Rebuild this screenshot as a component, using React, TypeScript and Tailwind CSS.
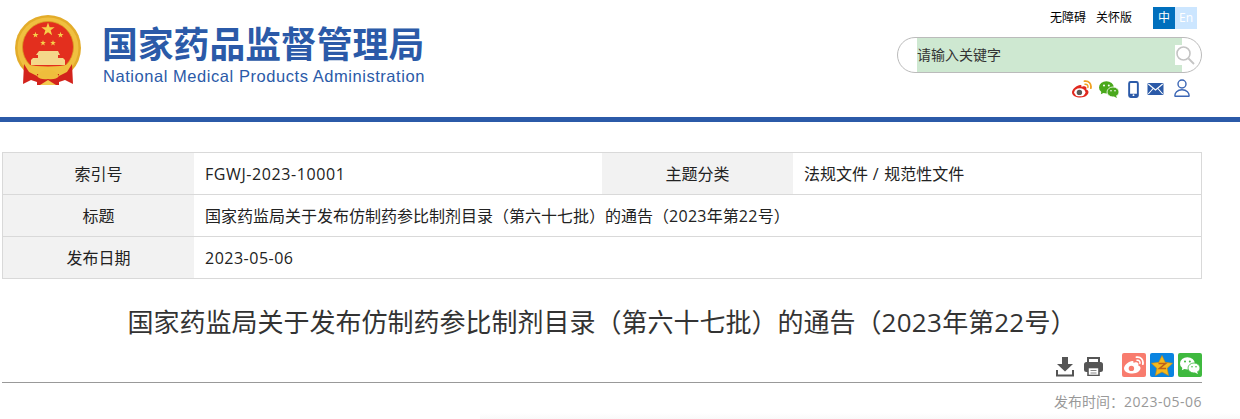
import React from "react";

function Emblem() {
  const star = (cx: number, cy: number, r: number) => {
    const pts: string[] = [];
    for (let i = 0; i < 10; i++) {
      const a = -Math.PI / 2 + (i * Math.PI) / 5;
      const rr = i % 2 === 0 ? r : r * 0.4;
      pts.push(`${cx + rr * Math.cos(a)},${cy + rr * Math.sin(a)}`);
    }
    return <polygon points={pts.join(" ")} fill="#f6d04a" />;
  };
  return (
    <svg width="68" height="72" viewBox="0 0 68 72" className="shrink-0">
      <circle cx="33" cy="34" r="33" fill="#e3ac2a" />
      <circle cx="33" cy="34" r="30.5" fill="#f0c040" />
      <circle cx="33" cy="33" r="25.5" fill="#e32f1e" stroke="#d99a22" strokeWidth="0.8" />
      {star(33, 15.5, 7)}
      {star(20.5, 21, 3.2)}
      {star(45.5, 21, 3.2)}
      {star(28, 29, 3)}
      {star(38, 29, 3)}
      <path d="M24 37 L43 37 L45 41 L43 41 L43 44 L48 44 L50 46 L50 51 L16 51 L16 46 L18 44 L23 44 L23 41 L21 41Z" fill="#f4d88a" />
      <path d="M9 50 Q33 55 57 50 L52 58 Q33 64 14 58Z" fill="#f0c040" />
      <path d="M9 50 L14 58 L22 62 L22 68 L16 66 L8 70Z" fill="#d3231c" />
      <path d="M57 50 L52 58 L44 62 L44 68 L50 66 L58 70Z" fill="#d3231c" />
      <path d="M22 60 L44 60 L44 71 L22 71Z" fill="#d3231c" />
      <path d="M22 62 Q25 56 33 56 Q41 56 44 62 Q41 66 33 65 Q25 66 22 62Z" fill="#efbe3c" />
      <path d="M25 71 L33 66 L41 71Z" fill="#f3cb50" />
    </svg>
  );
}

function Weibo({ eye = "#5a5a5a", wave = "#f0a020", body = "#e0281e" }: { eye?: string; wave?: string; body?: string }) {
  return (
    <svg width="20" height="18" viewBox="0 0 20 18">
      <path d="M8 5 C3 6 0 10 0 12.5 C0 15.5 4 17.5 8.5 17.5 C13.5 17.5 16.5 14.5 16.5 12 C16.5 10.3 15 9.7 14.2 9.5 C14.8 8 14.7 6.6 12.5 6.3 C11.4 6.2 10 6.8 9.4 7 C9.8 5.4 9.4 4.6 8 5Z" fill={body} />
      <ellipse cx="7.8" cy="12.3" rx="5.6" ry="4" fill="#fff" />
      <circle cx="7.4" cy="12.4" r="2.7" fill={eye} />
      <path d="M12.5 1.2 C16.5 0.4 19.8 3.8 18.8 8.2" fill="none" stroke={wave} strokeWidth="1.8" strokeLinecap="round" />
      <path d="M13 4.2 C15 3.8 16.4 5.4 15.9 7.4" fill="none" stroke={wave} strokeWidth="1.5" strokeLinecap="round" />
    </svg>
  );
}

function Wechat({ color = "#4aa81c", inner = "#fff", size = 20 }: { color?: string; inner?: string; size?: number }) {
  return (
    <svg width={size} height={size * 0.85} viewBox="0 0 20 17">
      <ellipse cx="7.4" cy="6.4" rx="7.4" ry="6.2" fill={color} />
      <path d="M2.5 10 L1.8 13.2 L5.6 11.5Z" fill={color} />
      <ellipse cx="14" cy="11" rx="6" ry="5" fill={color} stroke={inner} strokeWidth="0.8" />
      <path d="M17 14.5 L18 17 L14.8 15.6Z" fill={color} />
      <circle cx="5" cy="4.6" r="1" fill={inner} />
      <circle cx="9.8" cy="4.6" r="1" fill={inner} />
      <circle cx="12" cy="9.8" r="0.8" fill={inner} />
      <circle cx="16" cy="9.8" r="0.8" fill={inner} />
    </svg>
  );
}

function TopIcons() {
  return (
    <div className="flex items-center h-[20px] pl-[175px] w-full">
      <Weibo />
      <span className="ml-[7px] flex"><Wechat /></span>
      <svg className="ml-[9px]" width="11" height="17" viewBox="0 0 10 16">
        <rect x="0.9" y="0.9" width="8.2" height="14.2" rx="1.4" fill="#fff" stroke="#2b5aa8" strokeWidth="1.8" />
        <rect x="1" y="12" width="8" height="3" fill="#2b5aa8" />
        <circle cx="5" cy="13.3" r="0.9" fill="#fff" />
      </svg>
      <svg className="ml-[8px]" width="17" height="12" viewBox="0 0 16 12">
        <rect width="16" height="12" rx="1" fill="#2b5aa8" />
        <path d="M0.8 1 L8 7 L15.2 1 M0.8 11 L5.6 5.5 M15.2 11 L10.4 5.5" fill="none" stroke="#fff" strokeWidth="1.1" />
      </svg>
      <svg className="ml-[10px] -translate-y-[1px]" width="16" height="18" viewBox="0 0 16 18">
        <circle cx="8" cy="5" r="4" fill="none" stroke="#3b66b5" strokeWidth="1.4" />
        <path d="M1 17.2 L15 17.2 C15.6 13.8 12.5 10.8 8 10.8 C3.5 10.8 0.4 13.8 1 17.2Z" fill="none" stroke="#3b66b5" strokeWidth="1.4" strokeLinejoin="round" />
      </svg>
    </div>
  );
}

function Row({ children, last }: { children: React.ReactNode; last?: boolean }) {
  return <div className={`flex ${last ? "h-[41px]" : "h-[42px] border-b border-[#d9d9d9]"}`}>{children}</div>;
}
function Label({ children }: { children: React.ReactNode }) {
  return <div className="w-[191px] shrink-0 bg-[#f2f2f2] flex items-center justify-center">{children}</div>;
}
function Value({ children, w }: { children: React.ReactNode; w?: boolean }) {
  return <div className={`${w ? "w-[408px] shrink-0" : "flex-1"} flex items-center pl-[11px] whitespace-pre`}>{children}</div>;
}

export default function App() {
  return (
    <div className="w-[1240px] h-[419px] overflow-hidden bg-white text-[#222] font-['Open_Sans','Noto_Sans_CJK_SC',sans-serif]">
      <header className="h-[122px] border-b-[5px] border-[#2b5aa8] flex justify-between">
        <div className="flex pl-[15px] pt-[14px]">
          <Emblem />
          <div className="ml-[19px] text-[#2b5aa8]">
            <div className="text-[35.8px] font-bold leading-[46px] mt-[5px] whitespace-nowrap font-['Noto_Sans_CJK_SC',sans-serif]">国家药品监督管理局</div>
            <div className="text-[16.5px] tracking-[0.55px] leading-[20px] whitespace-nowrap mt-[1px] ml-[1px] font-['Liberation_Sans',sans-serif]">National Medical Products Administration</div>
          </div>
        </div>
        <div className="w-[305px] mr-[38px] flex flex-col items-end">
          <div className="flex items-start pt-[7px] h-[37px] w-full justify-end pr-[5px]">
            <span className="text-[12px] leading-[22px] text-black">无障碍</span>
            <span className="text-[12px] leading-[22px] text-black ml-[10px]">关怀版</span>
            <span className="ml-[21px] w-[22px] h-[22px] bg-[#006fbd] text-white text-[12px] leading-[22px] text-center">中</span>
            <span className="w-[22px] h-[22px] bg-[#cce6ff] text-white text-[12px] leading-[22px] text-center">En</span>
          </div>
          <div className="w-[305px] h-[36px] border border-[#bbb] rounded-[18px] flex items-stretch pl-[19px]">
            <div className="w-[265px] bg-[#cee8d1] text-[14px] leading-[34px] text-[#333] whitespace-nowrap">请输入关键字</div>
            <div className="w-[8px] flex items-center -ml-[7px] relative">
              <svg className="absolute left-0 top-[7px] bg-white" width="20" height="20" viewBox="0 0 20 20">
                <circle cx="8.5" cy="8.5" r="6.5" fill="none" stroke="#c4c4c4" strokeWidth="1.6" />
                <path d="M13.5 13.5 L19 19" stroke="#c4c4c4" strokeWidth="1.8" />
              </svg>
            </div>
          </div>
          <div className="mt-[6px] w-full"><TopIcons /></div>
        </div>
      </header>

      <div className="mt-[30px] mx-[2px] w-[1200px] border border-[#d9d9d9] text-[16px] text-[#222]">
        <Row>
          <Label>索引号</Label>
          <Value w><span className="tracking-[0.6px]">FGWJ-2023-10001</span></Value>
          <Label>主题分类</Label>
          <Value>法规文件<span className="tracking-[0.7px]"> / </span>规范性文件</Value>
        </Row>
        <Row>
          <Label>标题</Label>
          <Value>国家药监局关于发布仿制药参比制剂目录（第六十七批）的通告（<span className="tracking-[0.3px]">2023</span>年第<span className="tracking-[0.3px]">22</span>号）</Value>
        </Row>
        <Row last>
          <Label>发布日期</Label>
          <Value><span className="tracking-[0.5px]">2023-05-06</span></Value>
        </Row>
      </div>

      <h1 className="mx-[2px] w-[1200px] mt-[24px] h-[38px] text-center text-[26px] leading-[38px] text-[#333] whitespace-nowrap">国家药监局关于发布仿制药参比制剂目录（第六十七批）的通告（<span className="tracking-[0.3px]">2023</span>年第<span className="tracking-[0.3px]">22</span>号）</h1>

      <div className="mx-[2px] w-[1200px] mt-[12px] h-[30px] border-b border-[#999] flex items-start justify-end">
        <svg width="18" height="20" viewBox="0 0 18 20" className="mt-[4px]">
          <path d="M6 0 H12 V7 H17 L9 14.5 L1 7 H6Z" fill="#555" />
          <path d="M1 13 V18.5 H17 V13" fill="none" stroke="#555" strokeWidth="2" />
        </svg>
        <svg width="19" height="19" viewBox="0 0 19 19" className="ml-[10px] mt-[4px]">
          <path d="M4 6 V1 H15 V6" fill="none" stroke="#555" strokeWidth="2" />
          <rect x="0" y="5" width="19" height="10" rx="2.5" fill="#555" />
          <rect x="4" y="10.5" width="11" height="8" fill="#fff" stroke="#555" strokeWidth="1.6" />
          <path d="M6.5 13.5 H12.5 M6.5 16 H12.5" stroke="#888" strokeWidth="1" />
        </svg>
        <span className="ml-[19px] w-[24px] h-[24px] rounded-[2px] bg-[#f87c6e] flex items-center justify-center">
          <Weibo eye="#f87c6e" wave="#fff" body="#fff" />
        </span>
        <span className="ml-[4px] w-[24px] h-[24px] rounded-[2px] bg-[#0a84e0] flex items-center justify-center">
          <svg width="22" height="21" viewBox="0 0 22 21">
            <path d="M11 0.5 L14.2 7.3 L21.6 8.2 L16.2 13.3 L17.6 20.6 L11 17 L4.4 20.6 L5.8 13.3 L0.4 8.2 L7.8 7.3Z" fill="#f5b91e" stroke="#c98a12" strokeWidth="0.6" />
            <path d="M7.5 8.5 H14.5 L8.5 13.5 H15" fill="none" stroke="#c0601a" strokeWidth="1.6" />
          </svg>
        </span>
        <span className="ml-[4px] w-[24px] h-[24px] rounded-[2px] bg-[#3fb93f] flex items-center justify-center">
          <Wechat color="#fff" inner="#3fb93f" size={20} />
        </span>
      </div>

      <div className="mx-[2px] w-[1200px] mt-[9px] text-right text-[14px] leading-[20px] text-[#999]">发布时间：<span className="tracking-[0.5px]">2023-05-06</span></div>
      <div className="ml-[480px] mt-[1px] h-[7px] bg-gradient-to-b from-white to-[#f8f8f8]" />
    </div>
  );
}
